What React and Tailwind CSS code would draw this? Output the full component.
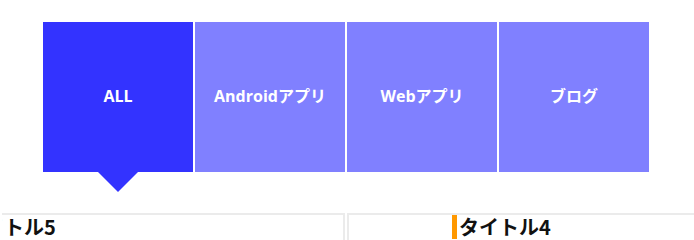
import { useState } from 'react';

const tabs = ['ALL', 'Androidアプリ', 'Webアプリ', 'ブログ'];

export default function App() {
  const [active, setActive] = useState(0);

  return (
    <div
      className="h-[240px] w-[694px] overflow-hidden bg-white"
      style={{ fontFamily: '"Noto Sans CJK JP", "Noto Sans", sans-serif' }}
    >
      {/* Tabs */}
      <div className="ml-[43px] mt-[22px] flex gap-[2px]">
        {tabs.map((t, i) => (
          <button
            key={t}
            onClick={() => setActive(i)}
            className={
              'relative flex h-[150px] w-[150px] items-center justify-center pb-[2px] font-["Open_Sans","Noto_Sans_CJK_JP",sans-serif] text-[16px] font-bold text-white ' +
              (i === active ? 'bg-[#3333ff]' : 'bg-[#8080ff]')
            }
          >
            {t}
            {i === active && (
              <span className="absolute left-1/2 top-full -translate-x-1/2 border-x-[20px] border-t-[20px] border-x-transparent border-t-[#3333ff]" />
            )}
          </button>
        ))}
      </div>

      {/* Cards */}
      <div className="ml-[2px] mt-[41px] flex gap-[2px]">
        <div className="h-[80px] w-[343px] shrink-0 overflow-hidden border-2 border-l-0 border-[#ebebeb]">
          <h3 className="-ml-[45px] flex items-center whitespace-nowrap text-[20px] font-bold leading-[24px] text-[#111]">
            <span className="mr-[2px] h-[24px] w-[5px] bg-[#ff9800]" />
            タイトル5
          </h3>
        </div>
        <div className="h-[80px] w-[360px] shrink-0 overflow-hidden border-2 border-[#ebebeb]">
          <h3 className="ml-[103px] flex items-center whitespace-nowrap text-[20px] font-bold leading-[24px] text-[#111]">
            <span className="mr-[2px] h-[24px] w-[5px] bg-[#ff9800]" />
            タイトル4
          </h3>
        </div>
      </div>
    </div>
  );
}
